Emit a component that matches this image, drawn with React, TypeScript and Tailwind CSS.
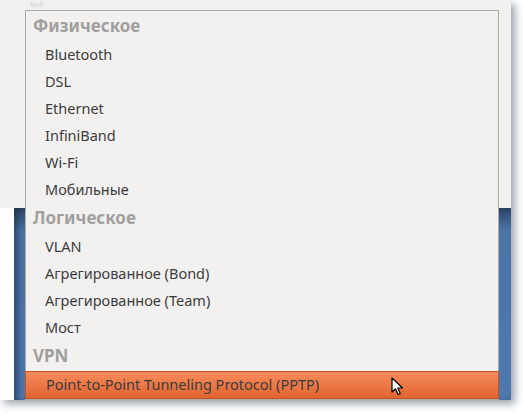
import React from "react";

type Row = { kind: "header" | "item"; label: string; selected?: boolean };

const rows: Row[] = [
  { kind: "header", label: "Физическое" },
  { kind: "item", label: "Bluetooth" },
  { kind: "item", label: "DSL" },
  { kind: "item", label: "Ethernet" },
  { kind: "item", label: "InfiniBand" },
  { kind: "item", label: "Wi-Fi" },
  { kind: "item", label: "Мобильные" },
  { kind: "header", label: "Логическое" },
  { kind: "item", label: "VLAN" },
  { kind: "item", label: "Агрегированное (Bond)" },
  { kind: "item", label: "Агрегированное (Team)" },
  { kind: "item", label: "Мост" },
  { kind: "header", label: "VPN" },
  { kind: "item", label: "Point-to-Point Tunneling Protocol (PPTP)", selected: true },
];

function Cursor() {
  return (
    <svg width="14" height="20" viewBox="0 0 14 20" className="absolute left-[391px] top-[377px]">
      <path
        d="M1 1 L1 15 L4.5 11.8 L7 17.5 L9.2 16.6 L6.8 11 L11.5 11 Z"
        fill="#fff"
        stroke="#000"
        strokeWidth="1.2"
        strokeLinejoin="round"
      />
    </svg>
  );
}

export default function App() {
  return (
    <div className="relative h-[414px] w-[523px] overflow-hidden bg-white font-['Noto_Sans',sans-serif]">
      {/* window behind the popup */}
      <div className="flex h-[400px] w-[511px] flex-col shadow-[4px_4px_8px_rgba(40,50,70,0.45)]">
        <div className="h-[208px] bg-[#f2f1f0]">
          <div className="pl-[30px] pt-px text-[7px] leading-[8px] text-[#d2d2d2] blur-[0.5px]">Выб</div>
        </div>
        <div className="ml-[14px] flex-1 bg-[linear-gradient(180deg,#2c4566_0px,#4a74a8_22px,#4d79b0_100%)] shadow-[inset_6px_0_6px_-2px_rgba(20,30,50,0.5)]" />
      </div>

      {/* popup menu */}
      <div className="absolute left-[25px] top-[10px] w-[474px] border border-[#aeaca8] bg-[#f2f1f0]">
        {rows.map((row) =>
          row.kind === "header" ? (
            <div
              key={row.label}
              className="flex h-[30px] items-center pl-[7px] text-[17px] font-bold text-[#a19f9d]"
            >
              {row.label}
            </div>
          ) : row.selected ? (
            <div
              key={row.label}
              className="-mx-px flex h-[28px] items-center border border-[#c2531f] bg-[linear-gradient(180deg,#f78b5d,#e1642f)] pl-[20px] text-[14.5px] text-[#3c3c3c]"
            >
              {row.label}
            </div>
          ) : (
            <div key={row.label} className="flex h-[27px] items-center pl-[19px] text-[14.5px] text-[#3c3c3c]">
              {row.label}
            </div>
          ),
        )}
      </div>

      <Cursor />
    </div>
  );
}
